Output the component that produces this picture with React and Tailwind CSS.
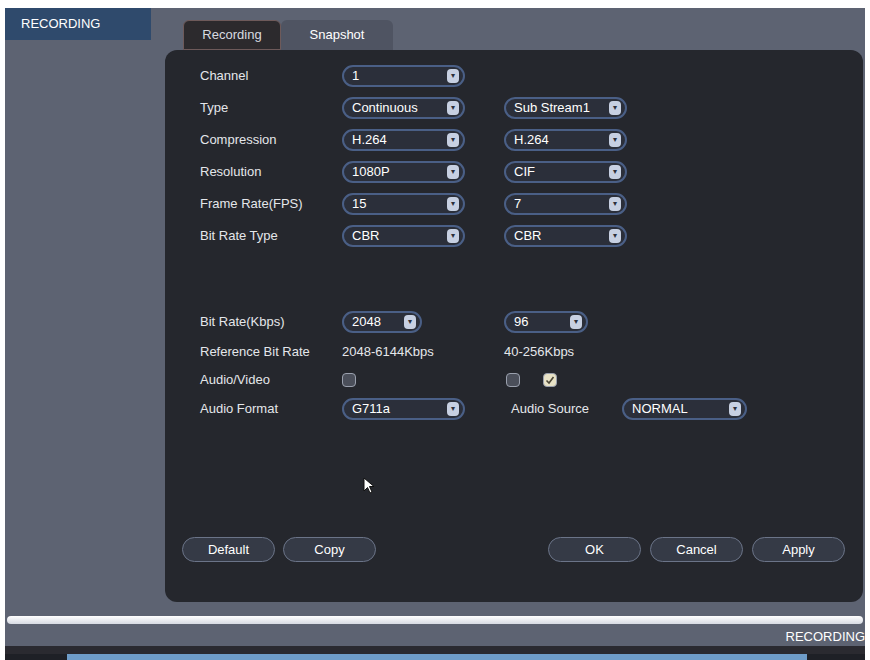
import React from "react";

const font = { fontFamily: '"Liberation Sans", Arial, sans-serif' };

function Select({ value, w = "w-[123px]" }) {
  return (
    <div className={`${w} h-[22px] rounded-full border-2 border-[#4a5f86] bg-[#2b2f3a] flex items-center justify-between pl-2 pr-1 text-[13px] text-white`}>
      <span>{value}</span>
      <span className="w-[12px] h-[14px] rounded-sm bg-[#c7d0e2] text-[#2b2f3a] text-[8px] leading-[14px] text-center">▾</span>
    </div>
  );
}

function Check({ on }) {
  return (
    <div className={`w-[14px] h-[14px] rounded-sm border border-[#9aa0ad] ${on ? "bg-[#e8e2c6]" : "bg-[#4b4f5a]"} flex items-center justify-center`}>
      {on && (
        <svg width="10" height="10" viewBox="0 0 10 10">
          <path d="M1.5 5.5 L4 8 L8.5 2" stroke="#4b4636" strokeWidth="1.6" fill="none" />
        </svg>
      )}
    </div>
  );
}

function Row({ label, children, h = "h-[32px]" }) {
  return (
    <div className={`flex items-center ${h}`}>
      <div className="w-[142px] text-[13px] text-[#e4e6ea]">{label}</div>
      {children}
    </div>
  );
}

function Btn({ children }) {
  return (
    <div className="w-[93px] h-[25px] rounded-full border border-[#6b7488] bg-[#353a46] text-[13px] text-white flex items-center justify-center">
      {children}
    </div>
  );
}

export default function App() {
  return (
    <div className="w-[870px] h-[660px] bg-white pl-[5px] pt-[8px] overflow-hidden" style={font}>
      <div className="w-[860px] h-[652px] bg-[#5d6372] flex flex-col">
        <div className="flex flex-1">
          <div className="w-[160px]">
            <div className="h-[32px] w-[146px] bg-[#2f4a6c] text-white text-[13px] px-4 pt-[6px]">RECORDING</div>
          </div>
          <div className="flex-1 pr-[2px] flex flex-col">
            <div className="flex pl-[18px] pt-[12px] h-[42px]">
              <div className="w-[98px] rounded-t-md bg-[#2c2a2d] border border-[#6e5a5a] text-[#d8dbe0] text-[13px] flex items-center justify-center">Recording</div>
              <div className="w-[112px] rounded-t-md bg-[#4f5462] text-white text-[13px] flex items-center justify-center">Snapshot</div>
            </div>
            <div className="h-[552px] rounded-xl bg-[#25272d] pl-[35px] pt-[10px] pr-[18px] relative">
              <Row label="Channel"><Select value="1" /></Row>
              <Row label="Type"><Select value="Continuous" /><div className="w-[39px]" /><Select value="Sub Stream1" /></Row>
              <Row label="Compression"><Select value="H.264" /><div className="w-[39px]" /><Select value="H.264" /></Row>
              <Row label="Resolution"><Select value="1080P" /><div className="w-[39px]" /><Select value="CIF" /></Row>
              <Row label="Frame Rate(FPS)"><Select value="15" /><div className="w-[39px]" /><Select value="7" /></Row>
              <Row label="Bit Rate Type"><Select value="CBR" /><div className="w-[39px]" /><Select value="CBR" /></Row>
              <div className="h-[54px]" />
              <Row label="Bit Rate(Kbps)"><Select value="2048" w="w-[80px]" /><div className="w-[82px]" /><Select value="96" w="w-[84px]" /></Row>
              <Row label="Reference Bit Rate" h="h-[28px]">
                <span className="w-[162px] text-[13px] text-[#e4e6ea]">2048-6144Kbps</span>
                <span className="text-[13px] text-[#e4e6ea]">40-256Kbps</span>
              </Row>
              <Row label="Audio/Video" h="h-[27px]">
                <Check /><div className="w-[150px]" /><Check /><div className="w-[23px]" /><Check on />
              </Row>
              <Row label="Audio Format">
                <Select value="G711a" />
                <span className="ml-[46px] w-[111px] text-[13px] text-[#e4e6ea]">Audio Source</span>
                <Select value="NORMAL" w="w-[125px]" />
              </Row>
              <svg className="absolute left-[198px] top-[427px]" width="14" height="18" viewBox="0 0 14 18">
                <path d="M1 1 L1 14 L4.5 10.5 L7 16 L9 15 L6.5 9.5 L11 9.5 Z" fill="white" stroke="#111" strokeWidth="1" />
              </svg>
              <div className="absolute left-[17px] right-[18px] top-[487px] flex justify-between">
                <div className="flex gap-[8px]"><Btn>Default</Btn><Btn>Copy</Btn></div>
                <div className="flex gap-[9px]"><Btn>OK</Btn><Btn>Cancel</Btn><Btn>Apply</Btn></div>
              </div>
            </div>
          </div>
        </div>
        <div className="h-[10px]" />
        <div className="h-[8px] mx-[2px] rounded-full bg-gradient-to-b from-white to-[#d7dbe3]" />
        <div className="h-[22px] flex justify-end items-end text-[13px] text-white pr-0">RECORDING</div>
        <div className="h-[8px] bg-[#2a2a30]" />
        <div className="h-[6px] bg-[#1e2026] flex"><div className="ml-[62px] w-[740px] bg-[#6e9cc8]" /></div>
      </div>
    </div>
  );
}
